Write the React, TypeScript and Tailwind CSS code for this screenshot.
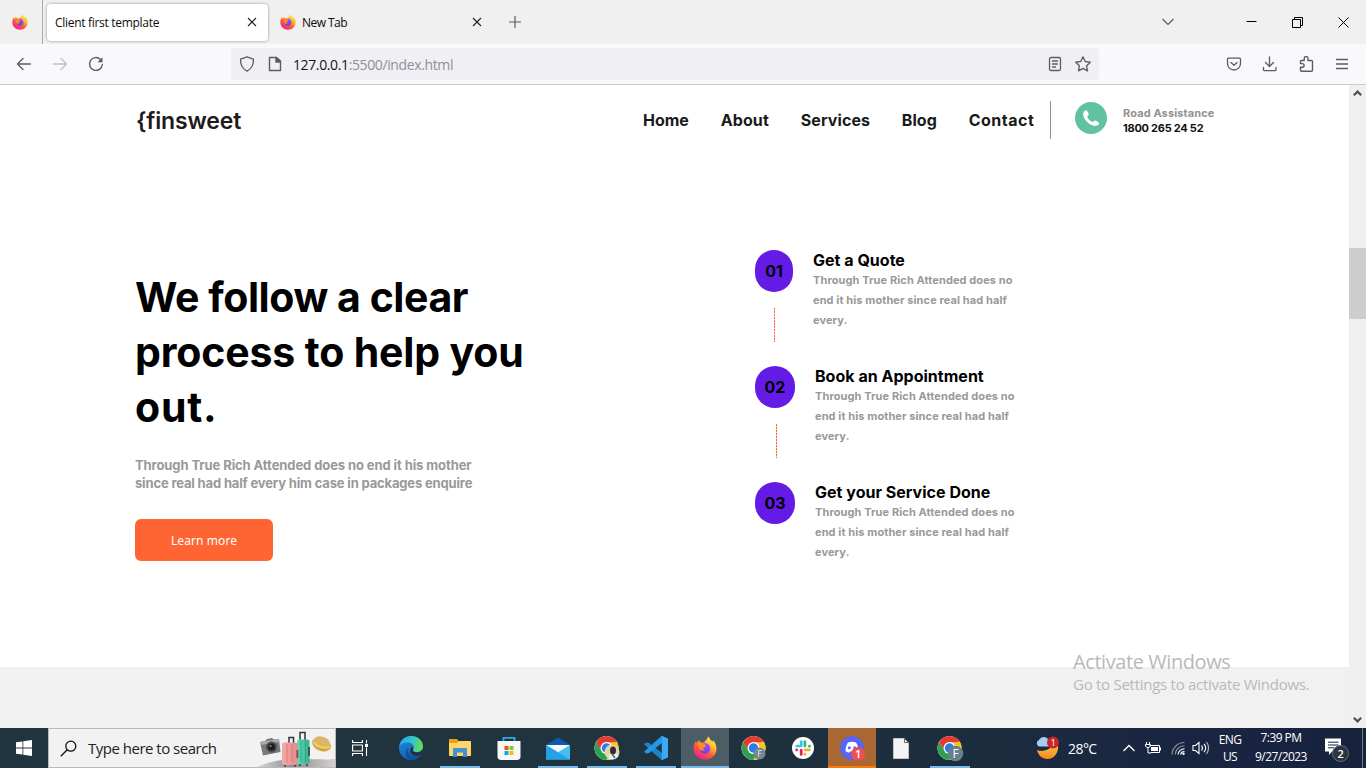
import React from "react";

const UI = "font-['Open_Sans','Noto_Sans',sans-serif]";
const PAGE = "font-['Inter',sans-serif]";

function Firefox({ size, id }: { size: number; id: string }) {
  return (
    <svg width={size} height={size} viewBox="0 0 24 24">
      <defs>
        <linearGradient id={id + "a"} x1="0.85" y1="0.05" x2="0.25" y2="0.95">
          <stop offset="0" stopColor="#fff44f" />
          <stop offset="0.35" stopColor="#ffb52e" />
          <stop offset="0.62" stopColor="#ff5a3c" />
          <stop offset="1" stopColor="#f0208a" />
        </linearGradient>
        <linearGradient id={id + "b"} x1="0.7" y1="0" x2="0.3" y2="1">
          <stop offset="0" stopColor="#a04bff" />
          <stop offset="1" stopColor="#5a48d8" />
        </linearGradient>
      </defs>
      <path d="M15 .3c1.3 1.3 2.2 2.6 2.7 4 1 .5 1.7 1 2.200 1.800 0-.9-.1-1.500-.3-2.200 2.200 1.700 3.900 5 3.900 8.600C23.500 19 18.500 23.700 12 23.700S.500 18.800.500 12.500c0-3.100.9-5.500 2.600-7.500 0 1 .2 1.700.5 2.300.6-1.200 1.700-2.400 3-3.200-.1 1 .1 1.900.8 2.600 1.300-.4 2.600-.3 3.700.1 1-2.400 3.500-2.900 3.900-6.500z" fill={`url(#${id}a)`} />
      <path d="M8 9.500c1-2.600 5.500-3 7.500-.9 2 1.900 2.300 5 .6 7.200-2 2.500-6 2.600-8 .1-1-1.300-1.300-2.600-.9-3.700 1.500.9 3.200.5 4.200-.6.700-.8 1.500-.9 1.600-1.500-1.200-.5-2.200-1.200-5-.6z" fill={`url(#${id}b)`} />
      <path d="M4 7.500c1.500-1.300 4-1.300 5.500 0l2.300.8c.9.400.8 1.200-.2 1.700-1 .4-1.700.9-1.700 2.100 0 .9.800 1.700 2 1.900-2 1.500-4.800.3-5.800-1.800z" fill="#ff8a2a" />
    </svg>
  );
}

function Chrome({ children }: { children?: React.ReactNode }) {
  return (
    <svg width="28" height="28" viewBox="0 0 28 28">
      <circle cx="13.500" cy="14" r="12" fill="#fff" />
      <path d="M3.110 8A12 12 0 0 0 13.500 26l5-8.800-5 2.400a5.600 5.600 0 0 1-4.900-2.900z" fill="#2da14c" />
      <path d="M23.890 8A12 12 0 0 1 13.500 26l4.900-9.100a5.600 5.600 0 0 0-4.900-8.400z" fill="#fcc31e" />
      <path d="M3.110 8A12 12 0 0 1 23.890 8L13.500 8.500 8.500 17z" fill="#e33b2e" />
      <circle cx="13.500" cy="14" r="6" fill="#fff" />
      <circle cx="13.500" cy="14" r="4.700" fill="#2d7bea" />
      {children}
    </svg>
  );
}

function TabClose() {
  return (
    <svg width="10" height="10" viewBox="0 0 10 10" stroke="#222" strokeWidth="1.100"><path d="M1 1l8 8M9 1L1 9" /></svg>
  );
}

function TabStrip() {
  return (
    <div className="flex h-11 items-center bg-[#f0f0f0] text-[#0c0c0d]">
      <div className="flex h-full w-[43px] items-center border-r border-[#aaaaab] pl-3"><Firefox size={16} id="t1" /></div>
      <div className="ml-1 flex h-[37px] w-[221px] items-center justify-between rounded bg-white pl-2 pr-[11px] shadow-[0_0_3px_rgba(0,0,0,0.4)]">
        <span className="pt-0.5 text-[12px] tracking-[-0.300px]">Client first template</span>
        <TabClose />
      </div>
      <div className="ml-[12px] flex w-[202px] items-center">
        <Firefox size={16} id="t2" />
        <span className="ml-1.5 flex-1 pt-0.5 text-[12px] tracking-[-0.550px]">New Tab</span>
        <TabClose />
      </div>
      <svg className="ml-[27px]" width="12" height="12" viewBox="0 0 12 12" stroke="#5b5b66" strokeWidth="1.200"><path d="M6 0v12M0 6h12" /></svg>
      <div className="flex-1" />
      <svg width="14" height="8" viewBox="0 0 14 8" fill="none" stroke="#5b5b66" strokeWidth="1.200"><path d="M1.500 1L7 6.500 12.500 1" /></svg>
      <svg className="mb-px ml-[71px]" width="11" height="11" viewBox="0 0 11 11"><path d="M.500 5h10v1H.500z" fill="#000" /></svg>
      <svg className="ml-[35px]" width="11" height="11" viewBox="0 0 11 11" fill="none" stroke="#000"><path d="M.5 2.500h8v8h-8zM2.500 2.500v-2h8v8h-2" /></svg>
      <svg className="ml-[35px] mr-[17px]" width="11" height="11" viewBox="0 0 11 11" stroke="#000"><path d="M.5.5l10 10M10.500.5l-10 10" /></svg>
    </div>
  );
}

function Toolbar() {
  return (
    <div className="flex h-[41px] items-center border-b border-[#cccccf] bg-[#f9f9fb]">
      <svg className="ml-4" width="16" height="16" viewBox="0 0 16 16" fill="none" stroke="#5b5b66" strokeWidth="1.300" strokeLinecap="round" strokeLinejoin="round"><path d="M14.500 8H1.500M7 2.500L1.500 8 7 13.500" /></svg>
      <svg className="ml-5" width="16" height="16" viewBox="0 0 16 16" fill="none" stroke="#c0c0c5" strokeWidth="1.300" strokeLinecap="round" strokeLinejoin="round"><path d="M1.500 8h13M9 2.500L14.500 8 9 13.500" /></svg>
      <svg className="ml-5" width="16" height="16" viewBox="0 0 16 16" fill="none" stroke="#5b5b66" strokeWidth="1.400" strokeLinecap="round"><path d="M14.300 8.500A6.400 6.400 0 1 1 12.500 3.500" /><path d="M14.500 1.200v5H9.500z" fill="#5b5b66" stroke="none" /></svg>
      <div className="ml-[127px] flex h-8 w-[868px] items-center rounded bg-[#f0f0f4]">
        <svg className="ml-2" width="16" height="16" viewBox="0 0 16 16" fill="none" stroke="#5b5b66" strokeWidth="1.300" strokeLinejoin="round"><path d="M8 .9L1.600 3.100c-.4 4.600 1 9.100 6.400 12 5.400-2.900 6.800-7.400 6.400-12z" /></svg>
        <svg className="ml-3" width="16" height="16" viewBox="0 0 16 16" fill="none" stroke="#5b5b66" strokeWidth="1.400" strokeLinejoin="round"><path d="M3 1.500h6.500L13.500 5v9.500H2.500v-13z" /><path d="M9 1.500V6h4.500z" fill="#5b5b66" /></svg>
        <span className="ml-2.5 flex-1 text-[14px] tracking-[-0.380px] text-[#8f8f9d]"><span className="text-[#15141a]">127.0.0.1</span>:5500/index.html</span>
        <svg width="16" height="16" viewBox="0 0 16 16" fill="none" stroke="#5b5b66" strokeWidth="1.300" strokeLinecap="round"><rect x="2.500" y="1.500" width="11" height="13" rx="1.500" /><path d="M5.500 5h5M5.500 8h5M5.500 11h3" /></svg>
        <svg className="ml-3 mr-2" width="16" height="16" viewBox="0 0 16 16" fill="none" stroke="#5b5b66" strokeWidth="1.300" strokeLinejoin="round"><path d="M8 .8l2.200 4.700 5.100.7-3.700 3.500.9 5.200L8 12.400l-4.500 2.500.9-5.200L.7 6.200l5.100-.7z" /></svg>
      </div>
      <svg className="ml-[127px]" width="16" height="16" viewBox="0 0 16 16" fill="none" stroke="#5b5b66" strokeWidth="1.300" strokeLinecap="round" strokeLinejoin="round"><path d="M2.500 2.200h11c.6 0 1 .4 1 1V7.500a6.500 6.500 0 0 1-13 0V3.200c0-.6.400-1 1-1z" /><path d="M5 6.500l3 2.800 3-2.800" /></svg>
      <svg className="ml-5" width="16" height="16" viewBox="0 0 16 16" fill="none" stroke="#5b5b66" strokeWidth="1.300" strokeLinecap="round" strokeLinejoin="round"><path d="M7.500.8v9.500M3.500 6.500l4 4 4-4M1.500 11.500v2.200c0 .6.400 1 1 1h10.500c.6 0 1-.4 1-1v-2.200" /></svg>
      <svg className="ml-5" width="16" height="16" viewBox="0 0 16 16" fill="none" stroke="#5b5b66" strokeWidth="1.400" strokeLinejoin="round"><path d="M6.200 4.500V2.500a1.900 1.900 0 0 1 3.800 0v2H13.500c.5 0 1 .4 1 1v8.700c0 .5-.4 1-1 1H3.500c-.5 0-1-.4-1-1v-3h1.800a1.800 1.800 0 0 0 0-3.600H2.500V5.500c0-.5.4-1 1-1z" /></svg>
      <svg className="ml-[21px]" width="14" height="16" viewBox="0 0 14 16" stroke="#5b5b66" strokeWidth="1.300"><path d="M1 3.500h12M1 8h12M1 12.500h12" /></svg>
    </div>
  );
}

function Scrollbar() {
  return (
    <div className="flex w-[17px] flex-col items-center bg-[#f0f0f0]">
      <svg width="17" height="17" viewBox="0 0 17 17" fill="none" stroke="#505050" strokeWidth="2.200"><path d="M4.800 10.300L8.500 6.600l3.700 3.700" /></svg>
      <div className="mt-[146px] h-[71px] w-full bg-[#cdcdcd]" />
      <div className="flex-1" />
      <svg width="17" height="17" viewBox="0 0 17 17" fill="none" stroke="#505050" strokeWidth="2.200"><path d="M4.800 6.700l3.700 3.700 3.700-3.700" /></svg>
    </div>
  );
}

function SiteHeader() {
  return (
    <header className="flex h-[70px] items-center pl-[136px]">
      <div className="w-[507px] pt-0.5 text-[23px] font-semibold leading-8 tracking-[-0.150px] text-[#1f1a1c]">{"{"}finsweet</div>
      <nav className="flex w-[391px] items-center gap-8 whitespace-nowrap text-[16px] font-bold text-[#1a1a1a]">
        <span className="w-[46px] tracking-[-0.050px]">Home</span>
        <span className="w-12 tracking-[0.100px]">About</span>
        <span className="w-[69px] tracking-[0.100px]">Services</span>
        <span className="w-[35px] tracking-[0.100px]">Blog</span>
        <span className="tracking-[0.500px]">Contact</span>
      </nav>
      <div className="ml-4 h-[38px] w-px bg-[#8c8c8c]" />
      <svg className="mb-1 ml-6" width="32" height="32" viewBox="0 0 32 32">
        <circle cx="16" cy="16" r="16" fill="#61c2a2" />
        <path d="M8.600 10c.6-1 1.700-1.900 2.600-1.800.8.200 2.700 3.300 2.600 4.100-.1.900-1.500 1.500-1.500 2.300.2 2.200 3.500 5.200 5.500 5.300.9 0 1.400-1.500 2.300-1.500 1 0 3.900 1.900 4 2.800 0 1-1 2-2 2.400-2.300.9-5.900.1-9.300-3-3.700-3.300-5.500-7.600-4.200-10.600z" fill="#fff" />
      </svg>
      <div className="ml-4 whitespace-nowrap pt-0.5 text-[11px] font-bold leading-[15px]">
        <div className="tracking-[0.110px] text-[#929292]">Road Assistance</div>
        <div className="tracking-[-0.250px] text-[#111]">1800 265 24 52</div>
      </div>
    </header>
  );
}

function Step({ n, title, badge, line = "", last }: { n: string; title: string; badge: string; line?: string; last?: boolean }) {
  return (
    <div className="flex h-[116px]">
      <div className="flex flex-col items-start">
        <div className={`flex h-[42px] items-center justify-center rounded-[20px] bg-[#651be6] text-[16px] font-bold text-black ${badge}`}>{n}</div>
        {!last && <div className={`mt-4 h-[34px] w-px bg-[repeating-linear-gradient(180deg,#ff6433_0px,#ff6433_2px,#ffd3c5_2px,#ffd3c5_3px)] ${line}`} />}
      </div>
      <div className="ml-5 whitespace-nowrap">
        <h3 className="h-5 text-[16px] font-bold leading-[21px] tracking-[0.020px] text-black">{title}</h3>
        <p className="text-[11px] font-bold leading-5 tracking-[0.100px] text-[#999]">
          Through True Rich Attended does no<br />end it his mother since real had half<br />every.
        </p>
      </div>
    </div>
  );
}

function Site() {
  return (
    <main className={`flex flex-1 flex-col bg-[#f1f1f1] ${PAGE}`}>
      <div className="h-[582px] bg-white">
        <SiteHeader />
        <section className="flex pl-[135px]">
          <div className="w-[620px] pt-[115px]">
            <h1 className="whitespace-nowrap text-[41px] font-bold leading-[55px] text-black">
              <span className="tracking-[-0.450px]">We follow a clear</span><br />
              <span className="tracking-[-0.150px]">process to help you</span><br />
              <span className="tracking-[0.800px]">out.</span>
            </h1>
            <p className="mt-[21px] whitespace-nowrap text-[13px] font-bold leading-[18px] text-[#999]">
              <span className="tracking-[-0.090px]">Through True Rich Attended does no end it his mother</span><br />
              <span className="tracking-[-0.160px]">since real had half every him case in packages enquire</span>
            </p>
            <button className="mt-[27px] flex h-[42px] w-[138px] items-center justify-center rounded-md bg-[#ff6433] pt-0.5 font-['Noto_Sans',sans-serif] text-[12px] tracking-[0.100px] text-white">Learn more</button>
          </div>
          <div className="pt-[95px]">
            <Step n="01" title="Get a Quote" badge="w-[38px]" line="ml-[19px]" />
            <Step n="02" title="Book an Appointment" badge="w-10" line="ml-[21px]" />
            <Step n="03" title="Get your Service Done" badge="w-10" last />
          </div>
        </section>
      </div>
    </main>
  );
}

function Slot({ children, state = "" }: { children: React.ReactNode; state?: string }) {
  const bg = state === "active" ? "bg-[#4d5d66]" : state === "alert" ? "bg-[#a96833]" : "";
  const line = state === "active" ? "w-full bg-[#76b9ed]" : state === "alert" ? "w-full bg-[#ff7a00]" : state === "open" ? "w-10 bg-[#76b9ed]" : "w-0";
  return (
    <div className={`mr-px flex h-10 w-12 flex-col items-center ${bg}`}>
      <div className="flex h-[38px] items-center justify-center pt-0.5">{children}</div>
      <div className={`h-0.5 ${line}`} />
    </div>
  );
}

function SearchArt() {
  return (
    <svg width="78" height="38" viewBox="0 0 78 38">
      <defs>
        <linearGradient id="floor" x1="0" x2="1"><stop offset="0" stopColor="#d9d9d9" /><stop offset="0.450" stopColor="#8f8d8d" /><stop offset="1" stopColor="#d4d0ce" /></linearGradient>
        <linearGradient id="pink" x1="0" x2="1"><stop offset="0" stopColor="#f5a9a4" /><stop offset="1" stopColor="#e58c8a" /></linearGradient>
        <linearGradient id="teal" x1="0" x2="1"><stop offset="0" stopColor="#61dbb9" /><stop offset="1" stopColor="#38af8f" /></linearGradient>
      </defs>
      <path d="M0 38C12 32 28 30 45 30s25 1 33 0v8z" fill="url(#floor)" />
      <path d="M3 13l5-1 2-2 5-1 2 1.500 5-.5 1.500 13L6 26.500z" fill="#77797a" />
      <path d="M3 13l19-3 .4 3L3.500 16z" fill="#a9abac" />
      <circle cx="14.500" cy="18" r="5.500" fill="#4b4d50" /><circle cx="14.500" cy="18" r="3.600" fill="#1a1c20" /><circle cx="13.500" cy="17" r="1.200" fill="#6e7782" />
      <path d="M43 11V3.500h5V11" fill="none" stroke="#303040" strokeWidth="1.500" />
      <rect x="40" y="10.500" width="12.500" height="25" rx="2" fill="url(#teal)" />
      <path d="M44 12v21M48.500 12v21" stroke="#2f9f84" strokeWidth=".8" />
      <rect x="51" y="18" width="2" height="9" fill="#355b5a" />
      <path d="M32 14V8.500h4.500V14" fill="none" stroke="#303040" strokeWidth="1.500" />
      <rect x="25" y="13.500" width="15.500" height="22.500" rx="2" fill="url(#pink)" />
      <path d="M30 15v19M35 15v19" stroke="#cf7777" strokeWidth=".8" />
      <rect x="39.500" y="21" width="1.800" height="8" fill="#744b55" />
      <path d="M28 36v1.500M38 36v1.500M43 35.500v1.500M50 35.500v1.500" stroke="#3f3f49" strokeWidth="2" />
      <ellipse cx="64.500" cy="15.500" rx="9.800" ry="6.500" fill="#cfa453" transform="rotate(22 64.500 15.500)" />
      <path d="M56.500 13c0-4 3-6.500 8-5.500 6 1 9.500 4.500 8.500 10-5 2-13 .5-16.500-4.500z" fill="#dcb56b" />
      <path d="M56.300 13c3 4.500 10 7 16.500 5" fill="none" stroke="#f3d44d" strokeWidth="2" />
    </svg>
  );
}

function Taskbar() {
  return (
    <div className="flex h-10 items-center bg-[linear-gradient(90deg,#20353f_0%,#20343f_45%,#1c2d3d_70%,#192642_85%,#17223d_100%)] text-white">
      <div className="flex w-12 justify-center">
        <svg width="16" height="16" viewBox="0 0 16 16" fill="#fff"><path d="M0 2.300l6.500-.9v6.100H0zM7.300 1.300L16 .1v7.400H7.300zM0 8.400h6.500v6.200L0 13.700zM7.300 8.400H16V16l-8.700-1.300z" /></svg>
      </div>
      <div className="flex h-10 w-72 items-center border border-[#b9b9b9] bg-[#f2f2f2] text-[#222]">
        <svg className="ml-[11px]" width="17" height="17" viewBox="0 0 17 17" fill="none" stroke="#111" strokeWidth="1.300"><circle cx="10.800" cy="6.200" r="5" /><path d="M7.200 9.800L.8 16.200" /></svg>
        <span className="ml-[11px] w-[169px] whitespace-nowrap text-[15px] tracking-[-0.500px]">Type here to search</span>
        <SearchArt />
      </div>
      <div className="flex w-[51px] pl-4">
        <svg width="16" height="16" viewBox="0 0 16 16" fill="none" stroke="#fff" strokeWidth="1.100"><path d="M.6 0v2.500h9.800V0M.6 16v-2.500h9.800V16M.6 5h9.800v6H.6zM14.500 0v3.500M14.500 7.500V16" /><path d="M13 4h3v3h-3z" fill="#fff" stroke="none" /></svg>
      </div>
      <Slot>
        <svg width="24" height="24" viewBox="0 0 24 24">
          <defs>
            <linearGradient id="e1" x1="0" y1=".3" x2="1" y2=".4"><stop offset="0" stopColor="#2ca5e8" /><stop offset=".55" stopColor="#35c4c9" /><stop offset="1" stopColor="#67e04b" /></linearGradient>
            <linearGradient id="e2" x1="0" y1="0" x2=".5" y2="1"><stop offset="0" stopColor="#1d90df" /><stop offset="1" stopColor="#135cb5" /></linearGradient>
          </defs>
          <circle cx="12" cy="12" r="12" fill="url(#e2)" />
          <path d="M.3 10.500C1.500 4 6.300 0 12 0c7 0 12 4.900 12 10.200 0 3.700-2.600 6-6 6-2.400 0-4.200-.9-4.200-1.900 0-.7 1.100-1.200 1.100-3C14.900 8.800 12 6.500 8.500 6.500 5 6.500 2 8 .3 10.500z" fill="url(#e1)" />
          <path d="M9 11.500c-1.600 4.500 2 9.500 7.500 9 2.200-.1 4.100-1 5.500-2-2 3.500-5.500 5.500-9.500 5.500C6.500 24 5 15.500 9 11.500z" fill="#124f9e" />
          <path d="M13.800 14.500c.3 1.200 2.200 1.900 4.500 1.700 2.600-.2 4.500-1.600 5.300-3.500.4 2.400-.5 4.500-1.500 5.800-5 3-11 1-11-4 0-1.500.8-2.800 2-3.500 1.300 1 1.100 2.400.7 3.500z" fill="#22333f" />
        </svg>
      </Slot>
      <Slot state="open">
        <svg width="22" height="20" viewBox="0 0 22 20"><path d="M0 1h8l2 2.500h12V18H0z" fill="#e8a20c" /><path d="M0 5h8l2-2h12v15H0z" fill="#fcd667" /><path d="M4 19v-7.500c0-1 .5-1.500 1.500-1.500h11c1 0 1.500.5 1.500 1.500V19h-4v-4.500H8V19z" fill="#3f93d4" /></svg>
      </Slot>
      <Slot>
        <svg width="24" height="24" viewBox="0 0 24 24"><path d="M6.500 6V1.800h11V6" fill="none" stroke="#2ea8e6" strokeWidth="1.800" /><path d="M.5 5h23v15.500c0 2-1.200 3.500-3.500 3.500H4C1.700 24 .5 22.500.5 20.500z" fill="#f7f7f7" /><path d="M7.500 10h4v4h-4z" fill="#f1511b" /><path d="M12.500 10h4v4h-4z" fill="#80cc28" /><path d="M7.500 15h4v4h-4z" fill="#00adef" /><path d="M12.500 15h4v4h-4z" fill="#fbbc09" /></svg>
      </Slot>
      <Slot state="open">
        <svg width="24" height="23" viewBox="0 0 24 23"><path d="M0 8L12 .5 24 8v4H0z" fill="#0e5aad" /><path d="M1 8h22v9H1z" fill="#f5f7f9" /><path d="M0 8l12 7.300L24 8v14.500H0z" fill="#45bcf2" /><path d="M0 8l24 14.500H0z" fill="#24a1e8" /></svg>
      </Slot>
      <Slot state="open">
        <Chrome><circle cx="19" cy="18" r="7.500" fill="#ded7ae" /><path d="M16 25c0-4 1-6 3.500-6.500C22 18 25 20 25.500 22c-2 3.500-6 4-9.500 3z" fill="#f3f1ee" /><ellipse cx="20" cy="16.500" rx="3" ry="4" fill="#3b2a2c" /><path d="M19 20l3 4" stroke="#4565a5" strokeWidth="1.500" /></Chrome>
      </Slot>
      <Slot state="open">
        <svg width="24" height="24" viewBox="0 0 24 24"><path d="M17.500 0L24 2.800v18.400L17.500 24 0 8.200 2 6.500l3 .5 13 10z" fill="#1c86cd" /><path d="M17.500 24L24 21.200V2.800L17.500 0 0 15.800l2 1.700 3-.5L18 7z" fill="#2399e6" /><path d="M18 0L24 2.800v18.400L18 24z" fill="#3aaaf2" /></svg>
      </Slot>
      <Slot state="active"><Firefox size={24} id="tb" /></Slot>
      <Slot><Chrome><circle cx="19.500" cy="19.500" r="6" fill="#748791" /><text x="17.300" y="23" fontSize="9" fill="#e0e6e9" className="font-['Open_Sans',sans-serif]">F</text></Chrome></Slot>
      <Slot>
        <svg width="22" height="22" viewBox="0 0 22 22" fill="none" strokeWidth="2.700" strokeLinecap="round"><circle cx="11" cy="11" r="11" fill="#fff" /><path d="M9.300 4.500v4" stroke="#36c5f0" /><path d="M4.700 9h4" stroke="#36c5f0" /><path d="M12.900 4.700v4.200" stroke="#2eb67d" /><path d="M17.400 9.200h.1" stroke="#2eb67d" /><path d="M13.200 12.900h4.200" stroke="#ecb22e" /><path d="M12.900 17.200v.1" stroke="#ecb22e" /><path d="M9.200 13.200v4.200" stroke="#e01e5a" /><path d="M4.600 12.900h.1" stroke="#e01e5a" /></svg>
      </Slot>
      <Slot state="alert">
        <svg width="26" height="26" viewBox="0 0 26 26"><circle cx="13" cy="13" r="12" fill="#5865f2" /><path d="M9 7.500c2.500-1 5.500-1 8 0 1.500 2 2.500 5 2.500 8.500-1.300 1-2.600 1.500-3.800 1.700l-.7-1.400c-1.300.3-2.700.3-4 0l-.7 1.400c-1.200-.2-2.500-.7-3.800-1.700 0-3.500 1-6.500 2.500-8.500z" fill="#fff" /><circle cx="10.300" cy="12.800" r="1.500" fill="#5865f2" /><circle cx="15.700" cy="12.800" r="1.500" fill="#5865f2" /><circle cx="19" cy="19" r="7" fill="#ed4f52" /><text x="16" y="23" fontSize="11" fontWeight="600" fill="#fff" className="font-['Open_Sans',sans-serif]">1</text></svg>
      </Slot>
      <Slot>
        <svg width="16" height="21" viewBox="0 0 16 21"><path d="M.5.500h11l4 4v16H.5z" fill="#f4f4f4" stroke="#c5c5c0" /><path d="M11.500.500v4h4z" fill="#fff" stroke="#626260" /></svg>
      </Slot>
      <Slot state="open"><Chrome><circle cx="19.500" cy="19.500" r="7.800" fill="#68808b" /><text x="16.600" y="24" fontSize="12" fill="#fff" className="font-['Open_Sans',sans-serif]">F</text></Chrome></Slot>
      <div className="flex-1" />
      <svg width="26" height="26" viewBox="0 0 26 26">
        <defs><linearGradient id="moon" x1="0" y1="0" x2="0" y2="1"><stop offset="0" stopColor="#ffc140" /><stop offset="1" stopColor="#f28a24" /></linearGradient></defs>
        <path d="M2 15c3 1.500 12 2 16-6l5 1c1 8-4 14-10.500 14C7 24 3 20 2 15z" fill="url(#moon)" />
        <path d="M4 11.500a3.500 3.500 0 0 1 0-6.500C6 1.500 11 1 13 4.500l1 7z" fill="#a9ccf3" />
        <circle cx="18" cy="7.500" r="6" fill="#cb2626" /><text x="15.600" y="11" fontSize="9.500" fill="#fff" className="font-['Open_Sans',sans-serif]">1</text>
      </svg>
      <span className="ml-[7px] w-[31px] whitespace-nowrap text-[14px] tracking-[-0.550px]">28°C</span>
      <svg className="ml-[24px]" width="12" height="8" viewBox="0 0 12 8" fill="none" stroke="#fff" strokeWidth="1.300"><path d="M.5 7L6 1.500 11.500 7" /></svg>
      <svg className="ml-[10px]" width="16" height="14" viewBox="0 0 16 14" fill="none" stroke="#fff"><path d="M4.500 4.500h10v7h-9M15.500 6.500v3" /><path d="M6 6h7v4H6z" fill="#fff" stroke="none" /><path d="M1.500 1v2M4.500 1v2M.5 3.500h5v1.800l-2.500 1.500-2.500-1.500zM3 7v5h3" /></svg>
      <svg className="ml-[10px]" width="14" height="14" viewBox="0 0 14 14" fill="none" stroke="#fff" strokeWidth="1.100"><path d="M1 13.500A12.500 12.500 0 0 1 13.500 1.500M4.200 13.500a9.300 9.300 0 0 1 9.300-8.800" opacity=".5" /><path d="M7 13.500a6.500 6.500 0 0 1 6.500-5.800M9.500 13.500a4 4 0 0 1 4-3" /><circle cx="12.500" cy="12.800" r="1.200" fill="#fff" stroke="none" /></svg>
      <svg className="ml-[7px]" width="18" height="14" viewBox="0 0 18 14" fill="none" stroke="#fff" strokeWidth="1.100"><path d="M1 4.500h2.500L7 1.500v11L3.500 9.500H1zM9.500 4.500c1.200 1.500 1.200 3.500 0 5M12 2.800c2 2.500 2 5.900 0 8.400" /><path d="M14.500 1c2.700 3.500 2.700 8.500 0 12" opacity=".7" /></svg>
      <div className="ml-[7px] flex w-[26px] flex-col items-center text-[12px] leading-[17px] tracking-[-0.650px]"><span>ENG</span><span>US</span></div>
      <div className="ml-2.5 flex w-[56px] flex-col items-center whitespace-nowrap text-[12px] leading-[17px] tracking-[-0.550px]"><span className="-mt-0.5 mb-0.5">7:39 PM</span><span>9/27/2023</span></div>
      <svg className="ml-[14px] mr-[12px] mt-1" width="27" height="26" viewBox="0 0 27 26"><path d="M2 1.500h16v13H9L6 18V14.500H2z" fill="#fff" /><path d="M5 5.200h10.500M5 8h10.500M5 10.800h6" stroke="#19243e" /><circle cx="17.500" cy="16.500" r="8" fill="#2c343f" stroke="#67707b" /><text x="14.400" y="20.500" fontSize="11" fontWeight="600" fill="#fff" className="font-['Open_Sans',sans-serif]">2</text></svg>
      <div className="mr-[3px] h-10 w-px bg-[#737d8c]" />
    </div>
  );
}

export default function App() {
  return (
    <div className={`relative flex h-[768px] w-[1366px] flex-col overflow-hidden ${UI}`}>
      <TabStrip />
      <Toolbar />
      <div className="flex h-[643px]">
        <Site />
        <Scrollbar />
      </div>
      <Taskbar />
      <div className="pointer-events-none absolute left-[1073px] top-[649px] whitespace-nowrap text-[#b9b9b9]">
        <div className="text-[20px] leading-[26px] tracking-[-0.420px]">Activate Windows</div>
        <div className="-mt-px text-[15px] leading-5 tracking-[-0.270px]">Go to Settings to activate Windows.</div>
      </div>
    </div>
  );
}
